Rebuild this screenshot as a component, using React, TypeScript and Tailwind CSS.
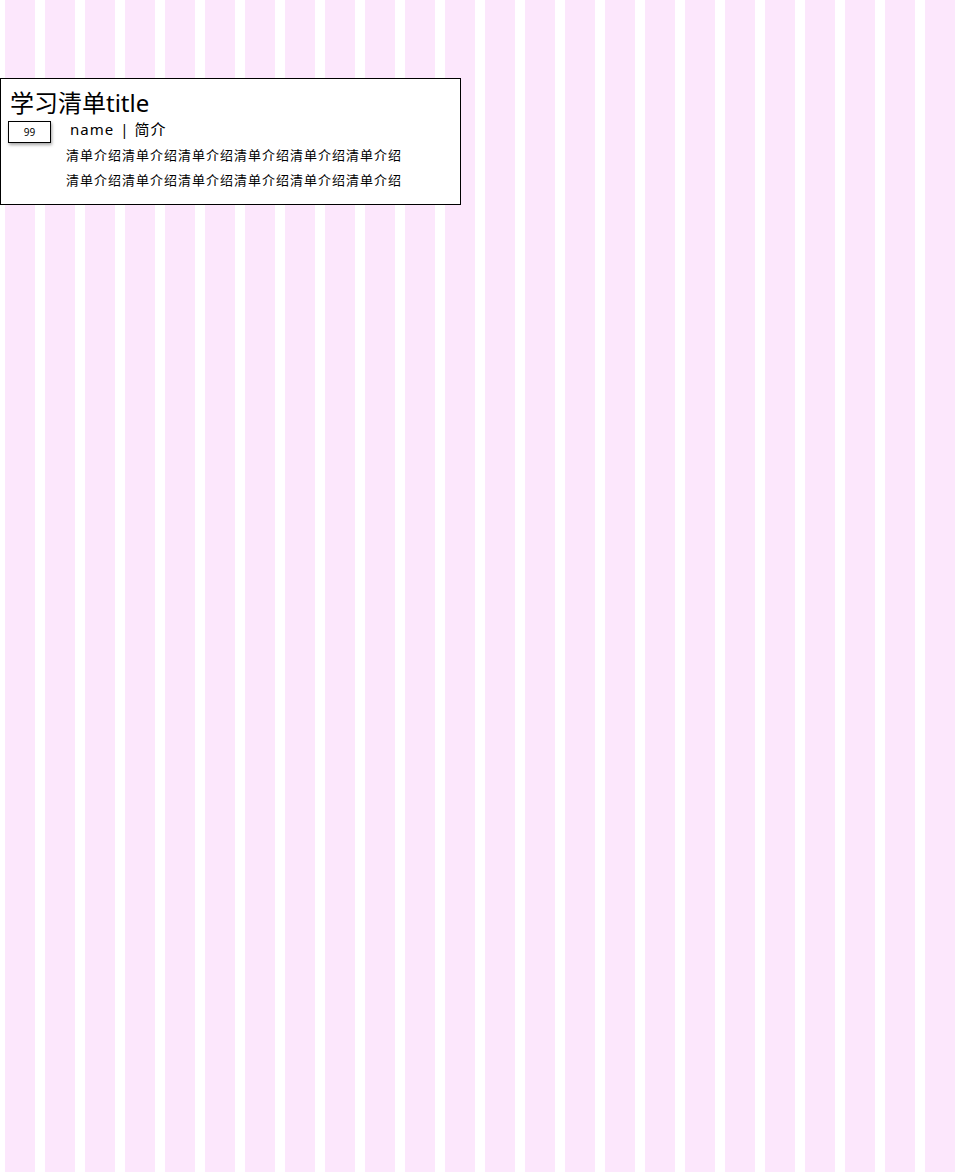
export default function App() {
  const desc = '清单介绍清单介绍清单介绍清单介绍清单介绍清单介绍';
  return (
    <div
      className="min-h-[1172px] w-[960px] bg-white bg-[repeating-linear-gradient(90deg,transparent_0_5px,#fce7fc_5px_35px,transparent_35px_40px)] pt-[78px]"
      style={{ fontFamily: '"Noto Sans", "Noto Sans CJK SC", sans-serif' }}
    >
      {/* list card */}
      <div className="w-[461px] h-[127px] border border-black bg-white text-black">
        <div className="pl-[9px] pt-[10px] text-[24px] leading-[28px]">学习清单title</div>
        <div className="flex items-start mt-[2px]">
          <div className="ml-[7px] mt-[2px] w-[43px] h-[22px] border border-black bg-white shadow-[1px_2px_3px_rgba(0,0,0,0.35)] flex items-center justify-center text-[10px]">
            99
          </div>
          <div className="ml-[15px]">
            <div className="flex items-center text-[15px] leading-[20px] pl-[4px]">
              <span className="tracking-[1px]">name</span>
              <span className="mx-[6px]">|</span>
              <span className="tracking-[1px]">简介</span>
            </div>
            <div className="mt-[4px] text-[13px] leading-[25px] tracking-[1px]">
              <div>{desc}</div>
              <div>{desc}</div>
            </div>
          </div>
        </div>
      </div>
    </div>
  );
}
